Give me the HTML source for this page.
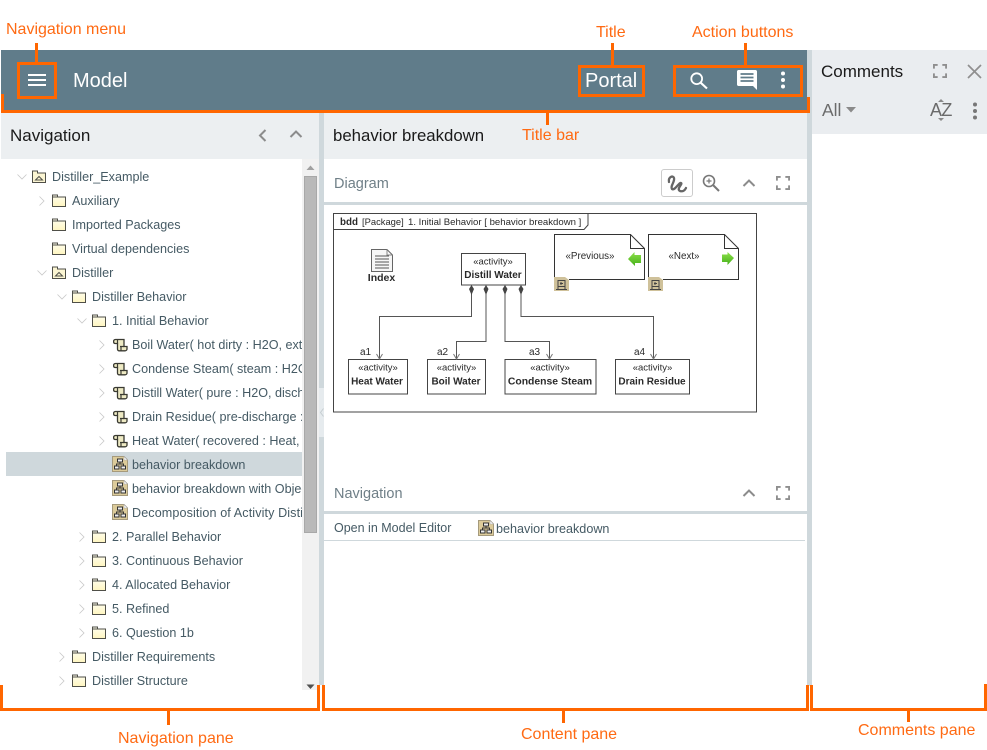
<!DOCTYPE html>
<html><head><meta charset="utf-8">
<style>
html,body{margin:0;padding:0;background:#fff}
body{width:987px;height:750px;overflow:hidden;position:relative;font-family:"Liberation Sans",sans-serif}
.a{position:absolute}
.o{position:absolute;background:#ff6600}
.ot{position:absolute;color:#ff6a13;font-size:16px;line-height:18px;white-space:nowrap}
.box{position:absolute;border:3px solid #ff6600;box-sizing:border-box}
.t{position:absolute;font-size:12.6px;line-height:26px;height:24px;color:#455a64;white-space:nowrap;overflow:hidden}
svg{position:absolute;overflow:visible}
</style></head><body>
<svg width="0" height="0" style="position:absolute">
<defs>
<linearGradient id="fg" x1="0" y1="0" x2="0" y2="1"><stop offset="0" stop-color="#fffef0"/><stop offset="1" stop-color="#fff6c0"/></linearGradient>
<linearGradient id="gg" x1="0" y1="0" x2="0" y2="1"><stop offset="0" stop-color="#8ee04a"/><stop offset="1" stop-color="#45b01a"/></linearGradient>
<symbol id="folder" viewBox="0 0 14 13"><path d="M.5 12.500V1H5.500V3H13.500V12.500Z" fill="url(#fg)" stroke="#4f4f48"/><path d="M.5 3H13.500" stroke="#4f4f48"/></symbol>
<symbol id="pkg" viewBox="0 0 14 13"><path d="M.5 12.500V1H5.500V3H13.500V12.500Z" fill="#fbf5d2" stroke="#4f4f48"/><path d="M3.500 10H10.500L7 6.500Z" fill="none" stroke="#4f4f48"/></symbol>
<symbol id="act" viewBox="0 0 15 14"><path d="M4.500 1.500H11V8.500H14V11C14 12 13 12.800 12 12.800H6C5 12.800 4.500 12 4.500 11V5.500H2C1 5.500 .6 4.500 .6 3.500C.6 2.500 1 1.500 2.500 1.500Z" fill="#eeeac4" stroke="#3a3a32" stroke-width="1.300"/><path d="M4.500 1.500V5.500M7 8.500H11M8 8.500V12.500" fill="none" stroke="#3a3a32" stroke-width="1.200"/></symbol>
<symbol id="dia" viewBox="0 0 16 16"><path d="M.5.500H12L15.500 4V15.500H.5Z" fill="#dccb9a" stroke="#a59a7c"/><path d="M12 .5V4H15.500Z" fill="#fff" stroke="#aaa" stroke-width=".6"/><rect x="5.500" y="3" width="5" height="3" fill="#eee" stroke="#333"/><rect x="2.500" y="10" width="4.500" height="3" fill="#eee" stroke="#333"/><rect x="9" y="10" width="4.500" height="3" fill="#eee" stroke="#333"/><path d="M8 6V8M4.500 10V8H11.500V10" fill="none" stroke="#333"/></symbol>
<symbol id="cr" viewBox="0 0 8 12"><path d="M1.500 1.500L6 6L1.500 10.500" fill="none" stroke="#c8c8c8" stroke-width=".8"/></symbol>
<symbol id="cd" viewBox="0 0 12 8"><path d="M1.500 1.500L6 6L10.500 1.500" fill="none" stroke="#c8c8c8" stroke-width=".8"/></symbol>
<symbol id="up" viewBox="0 0 14 10"><path d="M1.500 8L7 2.500L12.500 8" fill="none" stroke="#8c8c8c" stroke-width="2"/></symbol>
<symbol id="max" viewBox="0 0 15 15"><path d="M1 5V1H5M10 1H14V5M14 10V14H10M5 14H1V10" fill="none" stroke="#8f8f8f" stroke-width="2"/></symbol>
</defs></svg>

<!-- Header -->
<div class="a" style="left:1px;top:50px;width:806px;height:62px;background:#607c8a"></div>
<div class="a" style="left:73px;top:68px;font-size:20px;line-height:26px;color:#fff">Model</div>
<div class="a" style="left:585px;top:68px;font-size:20px;line-height:26px;color:#fff">Portal</div>
<svg style="left:28px;top:74px" width="18" height="12"><path d="M0 1H18M0 6H18M0 11H18" stroke="#fff" stroke-width="2"/></svg>
<svg style="left:690px;top:72px" width="18" height="17"><circle cx="6.700" cy="6.700" r="5.400" fill="none" stroke="#fff" stroke-width="1.800"/><path d="M10.800 10.800L17 16.500" stroke="#fff" stroke-width="2.100"/></svg>
<svg style="left:737px;top:70px" width="20" height="20"><path d="M1.500 0H18.500C19.300 0 20 .7 20 1.500V20L16 16H1.500C.7 16 0 15.300 0 14.500V1.500C0 .7.7 0 1.500 0Z" fill="#fff"/><path d="M3.500 4H16.500M3.500 7.500H16.500M3.500 11H16.500" stroke="#607c8a" stroke-width="1.800"/></svg>
<svg style="left:780px;top:71px" width="6" height="18"><circle cx="3" cy="2.500" r="2" fill="#fff"/><circle cx="3" cy="9" r="2" fill="#fff"/><circle cx="3" cy="15.500" r="2" fill="#fff"/></svg>

<!-- Dividers -->
<div class="a" style="left:807px;top:50px;width:5px;height:636px;background:#cfd8dc"></div>
<div class="a" style="left:319px;top:113px;width:5px;height:572px;background:#cfd8dc"></div>
<div class="a" style="left:319px;top:388px;width:5px;height:49px;background:#e6ebee"></div>
<svg style="left:320px;top:408px" width="4" height="9"><path d="M3.500 .5L.5 4.500L3.500 8.500" fill="none" stroke="#c5cdd1"/></svg>

<!-- Navigation pane -->
<div class="a" style="left:1px;top:113px;width:318px;height:46px;background:#eceff1"></div>
<div class="a" style="left:10px;top:124px;font-size:17px;line-height:23px;color:#1a1a1a">Navigation</div>
<svg style="left:258px;top:129px" width="9" height="13"><path d="M7.500 1L2 6.500L7.500 12" fill="none" stroke="#8c8c8c" stroke-width="2"/></svg>
<svg style="left:289px;top:129px" width="14" height="10"><use href="#up"/></svg>
<div class="a" style="left:302px;top:159px;width:17px;height:531px;background:#f1f1f1"></div>
<div class="a" style="left:304px;top:176px;width:13px;height:357px;background:#b9b9b9;border:1px solid #a8a8a8;box-sizing:border-box"></div>
<svg style="left:306px;top:165px" width="9" height="6"><path d="M.5 5L4.500 .5L8.500 5Z" fill="#a0a0a0"/></svg>
<svg style="left:306px;top:684px" width="9" height="6"><path d="M.5 .5H8.500L4.500 5Z" fill="#505050"/></svg>

<div class="a" style="left:6px;top:452px;width:296px;height:24px;background:#cfd8dc"></div>

<!-- tree -->
<svg style="left:16px;top:173px" width="12" height="8"><use href="#cd"/></svg>
<svg style="left:32px;top:170px" width="14" height="13"><use href="#pkg"/></svg>
<div class="t" style="left:52px;top:164px;width:250px">Distiller_Example</div>
<svg style="left:38px;top:195px" width="8" height="12"><use href="#cr"/></svg>
<svg style="left:52px;top:194px" width="14" height="13"><use href="#folder"/></svg>
<div class="t" style="left:72px;top:188px;width:230px">Auxiliary</div>
<svg style="left:52px;top:218px" width="14" height="13"><use href="#folder"/></svg>
<div class="t" style="left:72px;top:212px;width:230px">Imported Packages</div>
<svg style="left:52px;top:242px" width="14" height="13"><use href="#folder"/></svg>
<div class="t" style="left:72px;top:236px;width:230px">Virtual dependencies</div>
<svg style="left:36px;top:269px" width="12" height="8"><use href="#cd"/></svg>
<svg style="left:52px;top:266px" width="14" height="13"><use href="#pkg"/></svg>
<div class="t" style="left:72px;top:260px;width:230px">Distiller</div>
<svg style="left:56px;top:293px" width="12" height="8"><use href="#cd"/></svg>
<svg style="left:72px;top:290px" width="14" height="13"><use href="#folder"/></svg>
<div class="t" style="left:92px;top:284px;width:210px">Distiller Behavior</div>
<svg style="left:76px;top:317px" width="12" height="8"><use href="#cd"/></svg>
<svg style="left:92px;top:314px" width="14" height="13"><use href="#folder"/></svg>
<div class="t" style="left:112px;top:308px;width:190px">1. Initial Behavior</div>

<svg style="left:98px;top:339px" width="8" height="12"><use href="#cr"/></svg>
<svg style="left:113px;top:338px" width="15" height="14"><use href="#act"/></svg>
<div class="t" style="left:132px;top:332px;width:170px">Boil Water( hot dirty : H2O, external : Heat )</div>
<svg style="left:98px;top:363px" width="8" height="12"><use href="#cr"/></svg>
<svg style="left:113px;top:362px" width="15" height="14"><use href="#act"/></svg>
<div class="t" style="left:132px;top:356px;width:170px">Condense Steam( steam : H2O )</div>
<svg style="left:98px;top:387px" width="8" height="12"><use href="#cr"/></svg>
<svg style="left:113px;top:386px" width="15" height="14"><use href="#act"/></svg>
<div class="t" style="left:132px;top:380px;width:170px">Distill Water( pure : H2O, discharge )</div>
<svg style="left:98px;top:411px" width="8" height="12"><use href="#cr"/></svg>
<svg style="left:113px;top:410px" width="15" height="14"><use href="#act"/></svg>
<div class="t" style="left:132px;top:404px;width:170px">Drain Residue( pre-discharge : Heat )</div>
<svg style="left:98px;top:435px" width="8" height="12"><use href="#cr"/></svg>
<svg style="left:113px;top:434px" width="15" height="14"><use href="#act"/></svg>
<div class="t" style="left:132px;top:428px;width:170px">Heat Water( recovered : Heat, cold )</div>
<svg style="left:112px;top:456px" width="16" height="16"><use href="#dia"/></svg>
<div class="t" style="left:132px;top:452px;width:170px">behavior breakdown</div>
<svg style="left:112px;top:480px" width="16" height="16"><use href="#dia"/></svg>
<div class="t" style="left:132px;top:476px;width:170px">behavior breakdown with Objects</div>
<svg style="left:112px;top:504px" width="16" height="16"><use href="#dia"/></svg>
<div class="t" style="left:132px;top:500px;width:170px;letter-spacing:.1px">Decomposition of Activity Distill</div>

<svg style="left:78px;top:531px" width="8" height="12"><use href="#cr"/></svg>
<svg style="left:92px;top:530px" width="14" height="13"><use href="#folder"/></svg>
<div class="t" style="left:112px;top:524px;width:190px">2. Parallel Behavior</div>
<svg style="left:78px;top:555px" width="8" height="12"><use href="#cr"/></svg>
<svg style="left:92px;top:554px" width="14" height="13"><use href="#folder"/></svg>
<div class="t" style="left:112px;top:548px;width:190px">3. Continuous Behavior</div>
<svg style="left:78px;top:579px" width="8" height="12"><use href="#cr"/></svg>
<svg style="left:92px;top:578px" width="14" height="13"><use href="#folder"/></svg>
<div class="t" style="left:112px;top:572px;width:190px">4. Allocated Behavior</div>
<svg style="left:78px;top:603px" width="8" height="12"><use href="#cr"/></svg>
<svg style="left:92px;top:602px" width="14" height="13"><use href="#folder"/></svg>
<div class="t" style="left:112px;top:596px;width:190px">5. Refined</div>
<svg style="left:78px;top:627px" width="8" height="12"><use href="#cr"/></svg>
<svg style="left:92px;top:626px" width="14" height="13"><use href="#folder"/></svg>
<div class="t" style="left:112px;top:620px;width:190px">6. Question 1b</div>
<svg style="left:58px;top:651px" width="8" height="12"><use href="#cr"/></svg>
<svg style="left:72px;top:650px" width="14" height="13"><use href="#folder"/></svg>
<div class="t" style="left:92px;top:644px;width:210px">Distiller Requirements</div>
<svg style="left:58px;top:675px" width="8" height="12"><use href="#cr"/></svg>
<svg style="left:72px;top:674px" width="14" height="13"><use href="#folder"/></svg>
<div class="t" style="left:92px;top:668px;width:210px">Distiller Structure</div>

<!-- Content pane -->
<div class="a" style="left:324px;top:113px;width:483px;height:46px;background:#eceff1"></div>
<div class="a" style="left:333px;top:124px;font-size:16.800px;line-height:23px;color:#1a1a1a">behavior breakdown</div>
<div class="a" style="left:334px;top:174px;font-size:14.500px;line-height:20px;color:#6f7f87">Diagram</div>
<div class="a" style="left:661px;top:169px;width:32px;height:28px;border:1px solid #ccc;border-radius:3px;box-sizing:border-box;background:#fff"></div>
<svg style="left:667px;top:175px" width="20" height="17"><path d="M2 7C1 2 6 0 7 3C8 7 3 11 5 14C8 16 12 7 14 8C16 9 9 14 13 16C16 17 18 15 19 13" fill="none" stroke="#666" stroke-width="2.300" stroke-linecap="round"/></svg>
<svg style="left:702px;top:174px" width="18" height="18"><circle cx="7" cy="7" r="5.500" fill="none" stroke="#777" stroke-width="1.600"/><path d="M11 11L17 17" stroke="#777" stroke-width="2"/><path d="M4.500 7H9.500M7 4.500V9.500" stroke="#777" stroke-width="1.200"/></svg>
<svg style="left:742px;top:178px" width="14" height="10"><use href="#up"/></svg>
<svg style="left:776px;top:176px" width="14" height="14"><use href="#max"/></svg>
<div class="a" style="left:324px;top:202px;width:483px;height:3px;background:#cfd8dc"></div>

<!-- Diagram -->
<svg style="left:0;top:0" width="987" height="750" font-family="'Liberation Sans',sans-serif" font-size="9.200" fill="#2a2a2a">
<rect x="333.500" y="213.500" width="423" height="198.500" fill="#fff" stroke="#444"/>
<path d="M333.500 229.500H584L588 225V213.500" fill="none" stroke="#444"/>
<text x="340" y="225" font-weight="bold" font-size="9.800">bdd</text>
<text x="362" y="225" font-size="9.400">[Package]</text>
<text x="408" y="225" font-size="9.600">1. Initial Behavior [ behavior breakdown ]</text>
<path d="M371.500 249.500H387L392.500 255V271.500H371.500Z" fill="#f6f6f6" stroke="#666"/>
<path d="M387 249.500V255H392.500" fill="none" stroke="#888"/>
<path d="M375 256H389M375 259H389M375 262H389M375 265H389M375 268H389" stroke="#555"/>
<text x="381.500" y="281" text-anchor="middle" font-weight="bold" font-size="10.500">Index</text>
<g fill="#fff" stroke="#444">
<rect x="461.500" y="253.500" width="64" height="31.500"/>
<rect x="348.500" y="359.500" width="59" height="34.500"/>
<rect x="427.500" y="359.500" width="58" height="34.500"/>
<rect x="505" y="359.500" width="91" height="34.500"/>
<rect x="615.500" y="359.500" width="74" height="34.500"/>
</g>
<path d="M471.500 292V316.500H379.500V359M486 292V341.500H456.500V359M505 292V341.500H549.500V359M521 292V316.500H653.500V359" fill="none" stroke="#555"/>
<path d="M471.500 285L469 289L471.500 295L474 289ZM486 285L483.500 289L486 295L488.500 289ZM505 285L502.500 289L505 295L507.500 289ZM521 285L518.500 289L521 295L523.500 289Z" fill="#444"/>
<path d="M376.500 354L379.500 359L382.500 354M453.500 354L456.500 359L459.500 354M546.500 354L549.500 359L552.500 354M650.500 354L653.500 359L656.500 354" fill="none" stroke="#777"/>
<g text-anchor="middle" font-size="9.500">
<text x="493" y="264.500">«activity»</text>
<text x="378" y="370.500">«activity»</text>
<text x="456.500" y="370.500">«activity»</text>
<text x="550" y="370.500">«activity»</text>
<text x="652.500" y="370.500">«activity»</text>
</g>
<g text-anchor="middle" font-weight="bold" font-size="10">
<text x="493" y="278">Distill Water</text>
<text x="377" y="384.500">Heat Water</text>
<text x="456" y="384.500">Boil Water</text>
<text x="550" y="384.500" font-size="10.400">Condense Steam</text>
<text x="652" y="384.500">Drain Residue</text>
</g>
<g font-size="10"><text x="360" y="355">a1</text><text x="437" y="355">a2</text><text x="529" y="355">a3</text><text x="634" y="355">a4</text></g>
<path d="M554.500 234.500H630.500L644.500 248.500V279.500H554.500ZM630.500 234.500V248.500H644.500" fill="#fff" stroke="#333"/>
<path d="M648.500 234.500H724.500L738.500 248.500V279.500H648.500ZM724.500 234.500V248.500H738.500" fill="#fff" stroke="#333"/>
<text x="590" y="259" text-anchor="middle" font-size="9.800">«Previous»</text>
<text x="684" y="259" text-anchor="middle" font-size="9.800">«Next»</text>
<path d="M628 259L634.500 252V255H641V263H635V266Z" fill="url(#gg)"/>
<path d="M734 258L727.500 252V254.500H722V262H727.500V265Z" fill="url(#gg)"/>
<rect x="554" y="277" width="15" height="14" fill="#cfc19a"/>
<rect x="648" y="277" width="15" height="14" fill="#cfc19a"/>
<path d="M565 277L569 280V277Z M659 277L663 280V277Z" fill="#fff"/>
<path d="M558 280.500H565V286.500H558ZM556 289.500H567M558 286.500V289.500M565 286.500V289.500M561 282V285M560 283.500H563" fill="none" stroke="#444"/>
<path d="M652 280.500H659V286.500H652ZM650 289.500H661M652 286.500V289.500M659 286.500V289.500M655 282V285M654 283.500H657" fill="none" stroke="#444"/>
</svg>

<!-- Lower panel -->
<div class="a" style="left:334px;top:484px;font-size:14.500px;line-height:20px;color:#6f7f87">Navigation</div>
<svg style="left:742px;top:488px" width="14" height="10"><use href="#up"/></svg>
<svg style="left:776px;top:486px" width="14" height="14"><use href="#max"/></svg>
<div class="a" style="left:324px;top:511px;width:483px;height:3px;background:#cfd8dc"></div>
<div class="a" style="left:334px;top:519px;font-size:12.500px;line-height:18px;color:#455a64">Open in Model Editor</div>
<svg style="left:478px;top:520px" width="16" height="16"><use href="#dia"/></svg>
<div class="a" style="left:496px;top:520px;font-size:12.600px;line-height:18px;color:#455a64">behavior breakdown</div>
<div class="a" style="left:324px;top:540px;width:481px;height:1px;background:#cfd8dc"></div>

<!-- Comments pane -->
<div class="a" style="left:812px;top:50px;width:175px;height:84px;background:#eaedf0"></div>
<div class="a" style="left:821px;top:61px;font-size:17px;line-height:21px;color:#1a1a1a">Comments</div>
<svg style="left:933px;top:64px" width="14" height="14"><use href="#max"/></svg>
<svg style="left:967px;top:64px" width="15" height="15"><path d="M1 1L14 14M14 1L1 14" stroke="#8f8f8f" stroke-width="1.700"/></svg>
<div class="a" style="left:822px;top:100px;font-size:17.500px;line-height:21px;color:#6b6b6b">All</div>
<svg style="left:846px;top:107px" width="10" height="6"><path d="M0 0H10L5 5.500Z" fill="#8a8a8a"/></svg>
<div class="a" style="left:930px;top:100px;font-size:18px;line-height:21px;color:#6b6b6b;letter-spacing:-.6px">AZ</div>
<svg style="left:938px;top:99px" width="6" height="22"><path d="M0 3L3 0L6 3ZM0 19L3 22L6 19Z" fill="#8a8a8a"/></svg>
<svg style="left:972px;top:102px" width="6" height="18"><circle cx="3" cy="2.500" r="2" fill="#777"/><circle cx="3" cy="9" r="2" fill="#777"/><circle cx="3" cy="15.500" r="2" fill="#777"/></svg>

<!-- Annotations -->
<div class="box" style="left:17px;top:62px;width:40px;height:37px"></div>
<div class="o" style="left:35px;top:43px;width:3px;height:19px"></div>
<div class="box" style="left:578px;top:65px;width:67px;height:32px"></div>
<div class="o" style="left:611px;top:43px;width:3px;height:22px"></div>
<div class="box" style="left:673px;top:65px;width:130px;height:32px"></div>
<div class="o" style="left:744px;top:43px;width:3px;height:22px"></div>
<div class="o" style="left:1px;top:110px;width:808px;height:3px"></div>
<div class="o" style="left:1px;top:94px;width:3px;height:18px"></div>
<div class="o" style="left:807px;top:97px;width:3px;height:16px"></div>
<div class="o" style="left:546px;top:113px;width:3px;height:12px"></div>

<div class="o" style="left:0;top:708px;width:320px;height:3px"></div>
<div class="o" style="left:0;top:685px;width:3px;height:25px"></div>
<div class="o" style="left:317px;top:685px;width:3px;height:25px"></div>
<div class="o" style="left:167px;top:711px;width:3px;height:14px"></div>
<div class="o" style="left:322px;top:708px;width:487px;height:3px"></div>
<div class="o" style="left:322px;top:685px;width:3px;height:25px"></div>
<div class="o" style="left:806px;top:685px;width:3px;height:25px"></div>
<div class="o" style="left:562px;top:711px;width:3px;height:12px"></div>
<div class="o" style="left:810px;top:708px;width:177px;height:3px"></div>
<div class="o" style="left:810px;top:685px;width:3px;height:25px"></div>
<div class="o" style="left:984px;top:684px;width:3px;height:26px"></div>
<div class="o" style="left:907px;top:711px;width:3px;height:11px"></div>

<div class="ot" style="left:6px;top:21px">Navigation menu</div>
<div class="ot" style="left:596px;top:24px">Title</div>
<div class="ot" style="left:692px;top:24px">Action buttons</div>
<div class="ot" style="left:522px;top:127px">Title bar</div>
<div class="ot" style="left:118px;top:730px">Navigation pane</div>
<div class="ot" style="left:521px;top:726px">Content pane</div>
<div class="ot" style="left:858px;top:722px">Comments pane</div>
</body></html>
